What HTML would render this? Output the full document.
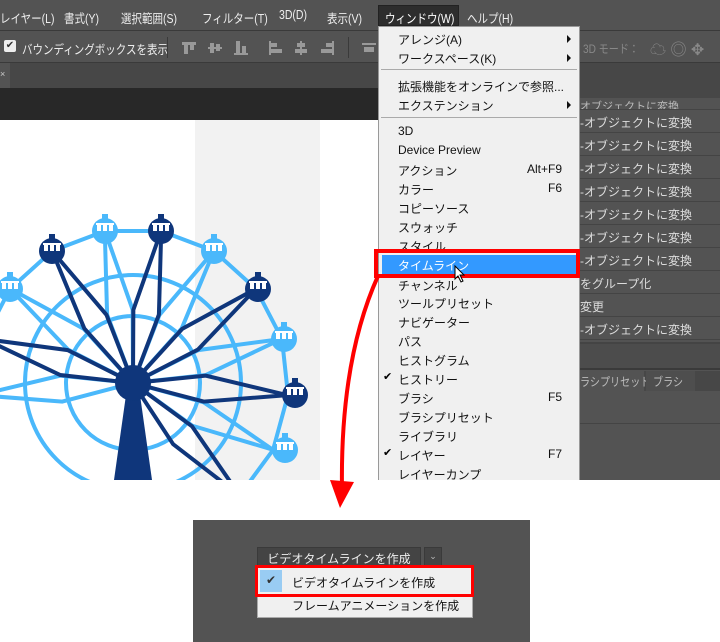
<!DOCTYPE html>
<html><head><meta charset="utf-8"><style>
*{margin:0;padding:0;box-sizing:border-box}
body{width:720px;height:642px;background:#fff;position:relative;overflow:hidden;font-family:"Liberation Sans","Noto Sans CJK JP",sans-serif;font-size:12px}
.abs{position:absolute}
.cx{transform:scaleX(0.84);transform-origin:0 0;white-space:nowrap}
.mb{left:0;top:0;width:720px;height:30px;background:#535353;color:#eee;font-size:12.5px}
.mb span{position:absolute;top:8px;transform:scaleX(0.84);transform-origin:0 0;white-space:nowrap}
.ob{left:0;top:30px;width:720px;height:33px;background:#535353;border-top:1px solid #3a3a3a;border-bottom:1px solid #3a3a3a}
.tb{left:0;top:63px;width:720px;height:25px;background:#474747}
.dk{left:0;top:88px;width:580px;height:32px;background:#282828}
.rp{left:580px;top:88px;width:140px;height:392px;background:#535353;overflow:hidden}
.row{position:absolute;left:0;width:140px;height:23px;border-bottom:1px solid #444;color:#ddd;font-size:12px;padding-top:4px;white-space:nowrap}
.menu{left:378px;top:26px;width:202px;height:454px;background:#f0f0f0;border:1px solid #999;border-bottom:none}
.mi{position:absolute;left:19px;font-size:12px;color:#111;white-space:nowrap}
.sc{position:absolute;right:17px;font-size:12px;color:#111}
.ar{position:absolute;right:8px;width:0;height:0;border-left:4px solid #111;border-top:4px solid transparent;border-bottom:4px solid transparent}
.sep{position:absolute;left:2px;right:2px;height:1px;background:#aaa}
</style></head><body>
<div class="abs mb">
<span style="left:0">レイヤー(L)</span><span style="left:64px">書式(Y)</span><span style="left:121px">選択範囲(S)</span><span style="left:202px">フィルター(T)</span><span style="left:279px">3D(D)</span><span style="left:327px">表示(V)</span>
<div class="abs" style="left:378px;top:5px;width:81px;height:21px;background:#2d2d2d;border:1px solid #222"></div>
<span style="left:385px;color:#fff">ウィンドウ(W)</span><span style="left:467px">ヘルプ(H)</span>
</div>
<div class="abs ob">
<div class="abs" style="left:4px;top:9px;width:12px;height:12px;background:#eee;border-radius:2px;color:#333;font-size:10px;line-height:12px;text-align:center">✔</div>
<span class="abs cx" style="left:22px;top:8px;color:#eee;font-size:12.5px">バウンディングボックスを表示</span>
<div class="abs" style="left:167px;top:6px;width:1px;height:21px;background:#3a3a3a"></div>
<div class="abs" style="left:182px;top:11px;width:14px;height:3px;background:#999"></div><div class="abs" style="left:184px;top:13px;width:4px;height:10px;background:#999"></div><div class="abs" style="left:190px;top:13px;width:4px;height:6px;background:#999"></div>
<div class="abs" style="left:208px;top:16px;width:14px;height:2px;background:#999"></div><div class="abs" style="left:210px;top:12px;width:4px;height:10px;background:#999"></div><div class="abs" style="left:216px;top:13px;width:4px;height:7px;background:#999"></div>
<div class="abs" style="left:234px;top:22px;width:14px;height:2px;background:#999"></div><div class="abs" style="left:236px;top:10px;width:4px;height:12px;background:#999"></div><div class="abs" style="left:242px;top:15px;width:4px;height:7px;background:#999"></div>
<div class="abs" style="left:269px;top:10px;width:2px;height:14px;background:#999"></div><div class="abs" style="left:271px;top:12px;width:6px;height:4px;background:#999"></div><div class="abs" style="left:271px;top:18px;width:11px;height:4px;background:#999"></div>
<div class="abs" style="left:300px;top:10px;width:2px;height:14px;background:#999"></div><div class="abs" style="left:297px;top:12px;width:8px;height:4px;background:#999"></div><div class="abs" style="left:295px;top:18px;width:12px;height:4px;background:#999"></div>
<div class="abs" style="left:332px;top:10px;width:2px;height:14px;background:#999"></div><div class="abs" style="left:326px;top:12px;width:6px;height:4px;background:#999"></div><div class="abs" style="left:321px;top:18px;width:11px;height:4px;background:#999"></div>
<div class="abs" style="left:348px;top:6px;width:1px;height:21px;background:#3a3a3a"></div>
<div class="abs" style="left:362px;top:12px;width:14px;height:2px;background:#999"></div><div class="abs" style="left:364px;top:16px;width:10px;height:5px;background:#999"></div>
<span class="abs cx" style="left:583px;top:9px;color:#888;font-size:12px">3D モード：</span>
<span class="abs" style="left:650px;top:5px;color:#888;font-size:16px">☁ ◎ ✥</span>
</div>
<div class="abs tb"><div class="abs" style="left:0;top:0;width:10px;height:25px;background:#535353;color:#ccc;font-size:9px;padding-top:6px">×</div></div>
<div class="abs dk"></div>
<div class="abs" style="left:0;top:120px;width:580px;height:360px;background:#fff"></div>
<div class="abs" style="left:195px;top:120px;width:125px;height:360px;background:#f2f2f2"></div>
<svg class="abs" style="left:0;top:120px" width="378" height="360" viewBox="0 120 378 360">
<g stroke="#4ab8fb" stroke-width="4" fill="none">
<circle cx="133" cy="383" r="67"/><circle cx="133" cy="383" r="108"/>
<polyline points="-22,395 -16,339 10,289 52,251 105,231 161,231 214,251 256,289 282,339 288,395 273,450 240,495"/>
</g>
<g fill="none" stroke-width="4">
<g stroke="#4ab8fb">
<g transform="rotate(-142.5 133 383)"><polyline points="288,383 205,370 133,383 205,396 288,383"/></g>
<g transform="rotate(-100.5 133 383)"><polyline points="288,383 205,370 133,383 205,396 288,383"/></g>
<g transform="rotate(-58.5 133 383)"><polyline points="288,383 205,370 133,383 205,396 288,383"/></g>
<g transform="rotate(-16.5 133 383)"><polyline points="288,383 205,370 133,383 205,396 288,383"/></g>
<g transform="rotate(25.5 133 383)"><polyline points="288,383 205,370 133,383 205,396 288,383"/></g>
<g transform="rotate(-184.5 133 383)"><polyline points="288,383 205,370 133,383 205,396 288,383"/></g>
</g>
<g stroke="#0f367b">
<g transform="rotate(-121.5 133 383)"><polyline points="288,383 205,370 133,383 205,396 288,383"/></g>
<g transform="rotate(-79.5 133 383)"><polyline points="288,383 205,370 133,383 205,396 288,383"/></g>
<g transform="rotate(-37.5 133 383)"><polyline points="288,383 205,370 133,383 205,396 288,383"/></g>
<g transform="rotate(4.5 133 383)"><polyline points="288,383 205,370 133,383 205,396 288,383"/></g>
<g transform="rotate(-163.5 133 383)"><polyline points="288,383 205,370 133,383 205,396 288,383"/></g>
<g transform="rotate(46.5 133 383)"><polyline points="288,383 205,370 133,383 205,396 288,383"/></g>
</g></g>
<polygon points="126,395 140,395 152,480 114,480" fill="#0f367b"/>
<circle cx="133" cy="383" r="18" fill="#0f367b"/>
<defs>
<g id="gl"><rect x="-3" y="-17" width="6" height="6" fill="#4ab8fb"/><circle r="13" fill="#4ab8fb"/><rect x="-9" y="-8" width="18" height="2" fill="#fff"/><rect x="-8" y="-6" width="4" height="6" fill="#fff"/><rect x="-2" y="-6" width="4" height="6" fill="#fff"/><rect x="4" y="-6" width="4" height="6" fill="#fff"/></g>
<g id="gd"><rect x="-3" y="-17" width="6" height="6" fill="#0f367b"/><circle r="13" fill="#0f367b"/><rect x="-9" y="-8" width="18" height="2" fill="#fff"/><rect x="-8" y="-6" width="4" height="6" fill="#fff"/><rect x="-2" y="-6" width="4" height="6" fill="#fff"/><rect x="4" y="-6" width="4" height="6" fill="#fff"/></g>
</defs>
<use href="#gl" x="10" y="289"/><use href="#gl" x="105" y="231"/><use href="#gl" x="214" y="251"/><use href="#gl" x="284" y="339"/><use href="#gl" x="285" y="450"/><use href="#gl" x="-22" y="395"/>
<use href="#gd" x="52" y="251"/><use href="#gd" x="161" y="231"/><use href="#gd" x="258" y="289"/><use href="#gd" x="295" y="395"/><use href="#gd" x="-16" y="339"/>
</svg>
<div class="abs rp">
<div class="abs" style="left:0;top:0;width:140px;height:10px;background:#474747"></div>
<div class="row" style="top:10px;height:12px;padding-top:0;overflow:hidden;font-size:11px;color:#bbb">オブジェクトに変換</div>
<div class="row" style="top:22px">-オブジェクトに変換</div>
<div class="row" style="top:45px">-オブジェクトに変換</div>
<div class="row" style="top:68px">-オブジェクトに変換</div>
<div class="row" style="top:91px">-オブジェクトに変換</div>
<div class="row" style="top:114px">-オブジェクトに変換</div>
<div class="row" style="top:137px">-オブジェクトに変換</div>
<div class="row" style="top:160px">-オブジェクトに変換</div>
<div class="row" style="top:183px">をグループ化</div>
<div class="row" style="top:206px">変更</div>
<div class="row" style="top:229px">-オブジェクトに変換</div>
<div class="abs" style="left:0;top:254px;width:140px;height:28px;background:#4c4c4c;border-top:2px solid #444;border-bottom:2px solid #3a3a3a"></div>
<div class="abs" style="left:0;top:283px;width:140px;height:20px;background:#474747"></div>
<div class="abs" style="left:0;top:283px;width:64px;height:20px;background:#535353"><span class="abs cx" style="left:0;top:2px;color:#bbb">ラシプリセット</span></div>
<div class="abs" style="left:66px;top:283px;width:49px;height:20px;background:#4e4e4e"><span class="abs cx" style="left:7px;top:2px;color:#bbb">ブラシ</span></div>
<div class="abs" style="left:0;top:335px;width:140px;height:1px;background:#444"></div>
</div>
<div class="abs menu">
<span class="mi" style="top:4px">アレンジ(A)</span><div class="ar" style="top:8px"></div>
<span class="mi" style="top:23px">ワークスペース(K)</span><div class="ar" style="top:27px"></div>
<div class="sep" style="top:42px"></div>
<span class="mi" style="top:51px">拡張機能をオンラインで参照...</span>
<span class="mi" style="top:70px">エクステンション</span><div class="ar" style="top:74px"></div>
<div class="sep" style="top:90px"></div>
<span class="mi" style="top:97px">3D</span>
<span class="mi" style="top:116px">Device Preview</span>
<span class="mi" style="top:135px">アクション</span><span class="sc" style="top:135px">Alt+F9</span>
<span class="mi" style="top:154px">カラー</span><span class="sc" style="top:154px">F6</span>
<span class="mi" style="top:173px">コピーソース</span>
<span class="mi" style="top:192px">スウォッチ</span>
<span class="mi" style="top:211px">スタイル</span>
<div class="abs" style="left:3px;top:228px;width:196px;height:20px;background:#3399ff"></div>
<span class="mi" style="top:230px;color:#fff">タイムライン</span>
<span class="mi" style="top:250px">チャンネル</span>
<span class="mi" style="top:268px">ツールプリセット</span>
<span class="mi" style="top:287px">ナビゲーター</span>
<span class="mi" style="top:306px">パス</span>
<span class="mi" style="top:325px">ヒストグラム</span>
<span class="mi" style="top:344px">ヒストリー</span><span class="abs" style="left:4px;top:343px;font-size:11px">✔</span>
<span class="mi" style="top:363px">ブラシ</span><span class="sc" style="top:363px">F5</span>
<span class="mi" style="top:382px">ブラシプリセット</span>
<span class="mi" style="top:401px">ライブラリ</span>
<span class="mi" style="top:420px">レイヤー</span><span class="sc" style="top:420px">F7</span><span class="abs" style="left:4px;top:419px;font-size:11px">✔</span>
<span class="mi" style="top:439px">レイヤーカンプ</span>
</div>
<div class="abs" style="left:374px;top:249px;width:206px;height:29px;border:4px solid #f00"></div>
<svg class="abs" style="left:320px;top:260px" width="160" height="260"><path d="M58 16 Q20 100 22 230" stroke="#f00" stroke-width="4" fill="none"/><polygon points="10,220 34,222 20,248" fill="#f00"/><path d="M135 6 l0 13 l3 -3 l3 6 l2 -1 l-3 -6 l4 0 z" fill="#fff" stroke="#000"/></svg>
<div class="abs" style="left:193px;top:520px;width:337px;height:122px;background:#535353"></div>
<div class="abs" style="left:257px;top:547px;width:164px;height:20px;background:#444;border:1px solid #3a3a3a;color:#eee;font-size:12px;text-align:center;padding-top:2px">ビデオタイムラインを作成</div>
<div class="abs" style="left:424px;top:547px;width:18px;height:20px;background:#444;border:1px solid #3a3a3a;color:#bbb;font-size:9px;text-align:center;padding-top:3px">⌄</div>
<div class="abs" style="left:257px;top:567px;width:216px;height:51px;background:#f0f0f0;border:1px solid #aaa"></div>
<div class="abs" style="left:260px;top:570px;width:22px;height:22px;background:#99ccf3;color:#333;font-size:12px;text-align:center;padding-top:3px">✔</div>
<span class="abs" style="left:292px;top:574px;font-size:12px;color:#111">ビデオタイムラインを作成</span>
<span class="abs" style="left:292px;top:597px;font-size:12px;color:#111">フレームアニメーションを作成</span>
<div class="abs" style="left:255px;top:565px;width:219px;height:32px;border:3px solid #f00"></div>
</body></html>
